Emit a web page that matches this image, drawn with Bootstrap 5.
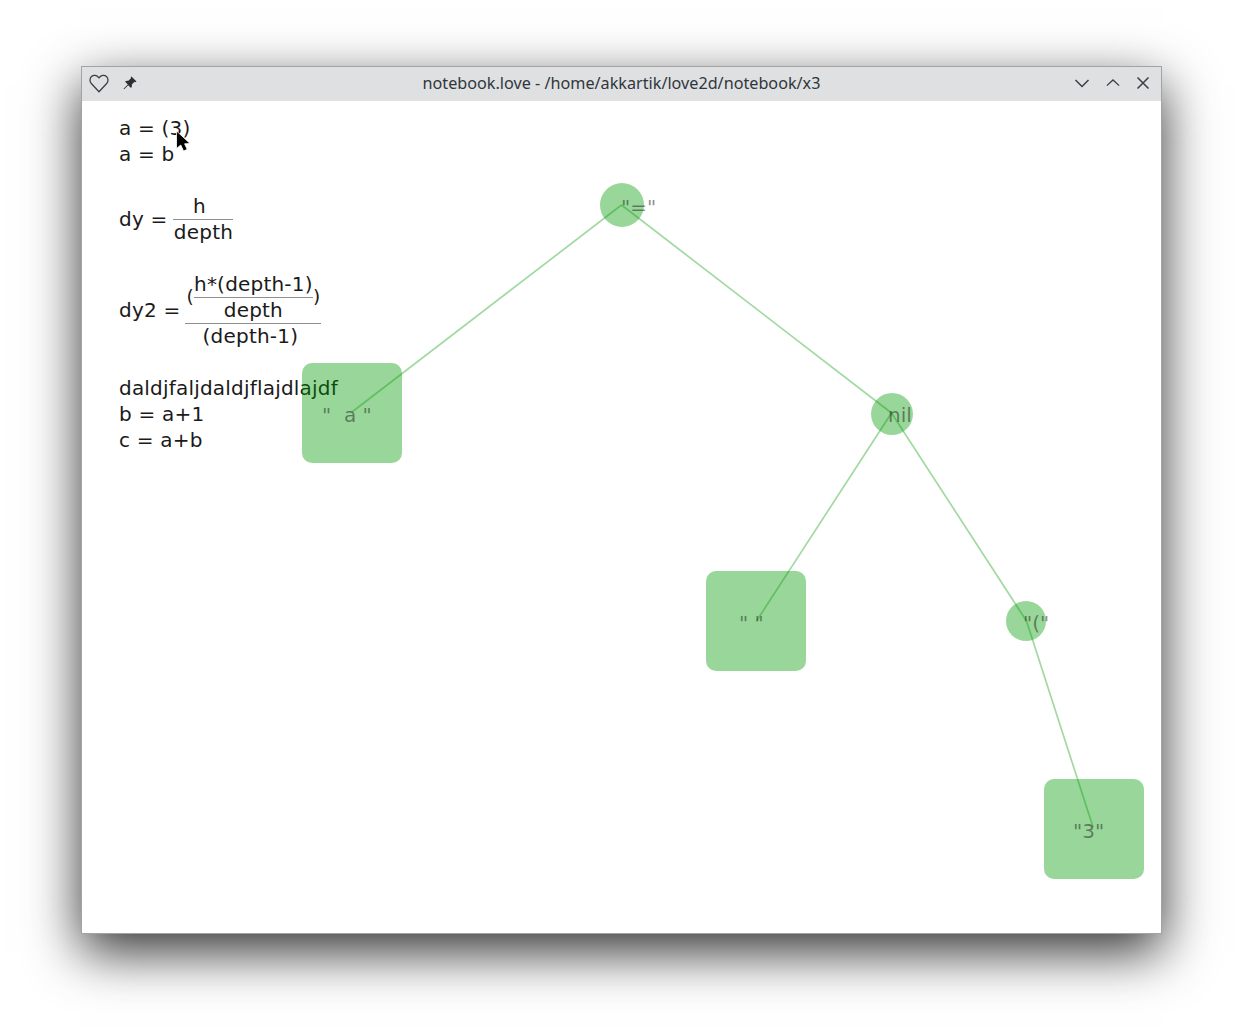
<!doctype html>
<html lang="en">
<head>
<meta charset="utf-8">
<title>notebook.love</title>
<link href="https://cdn.jsdelivr.net/npm/bootstrap@5.3.0/dist/css/bootstrap.min.css" rel="stylesheet">
<style>
html,body{height:100%;overflow:hidden;background:#fff}
.desk{padding:66px 0 0 81px;height:1032px}
.win{width:1081px;height:868px;border:1px solid #a3a3a3;background:#fff;box-shadow:0 18px 50px rgba(0,0,0,.8)}
.tbar{height:34px;padding-bottom:2px;background:#dee0e2;display:grid;grid-template-columns:1fr auto 1fr;align-items:center;font:16.2px/30px "Noto Sans",sans-serif;color:#31363b}
.tbar svg{display:block}
.tleft{padding-left:6px}
.tright{padding-right:11px}
.canvasx{height:832px;position:relative;font:20px/26px "DejaVu Sans",sans-serif;letter-spacing:.2px;color:#1a1a1a}
.notes{padding:14px 0 0 37px}
.ln{height:26px;white-space:pre}
.eq{display:flex;align-items:center;white-space:pre}
.fr{display:flex;flex-direction:column;text-align:center}
.fr>div{height:26px}
.fr>.over{height:auto}
.fr>.under{border-top:1px solid #8f8f8f;line-height:25px}
.f1{width:60px;margin-left:6px}
.f2{width:136px;margin-left:5px}
.f3{display:flex;align-items:center;justify-content:center}
.f3 .fr{width:119px;white-space:nowrap}
.shift{padding-right:6px}
.paren{font-size:18.5px;line-height:26px}
.wires{position:absolute;left:0;top:0;pointer-events:none}
.nd{position:absolute;background:rgba(0,153,0,.4)}
.sq{width:100px;height:100px;border-radius:10px}
.rnd{border-radius:50%}
.lab{position:absolute;color:rgba(30,30,30,.5);white-space:pre;line-height:26px;letter-spacing:0}
.cursorx{position:absolute;left:92px;top:29px}
</style>
</head>
<body>
<div class="desk">
  <div class="win d-flex flex-column">
    <div class="tbar">
      <div class="d-flex align-items-center gap-2 tleft">
        <svg class="me-1" width="22" height="22" viewBox="0 0 24 24" fill="none" stroke="#3b3f43" stroke-width="1.400"><path d="M12 21.500 3.600 12.600C1.600 10.400 1.800 6.900 3.800 5 6 3 9.600 3.200 12 6.300 14.400 3.200 18 3 20.200 5c2 1.900 2.200 5.400.2 7.600z"/></svg>
        <svg width="16" height="16" viewBox="0 0 16 16" fill="#2d3033"><path d="M9.500 1.500 14.500 6.500 13.500 7.300 12.600 6.800 9.800 9.600C10.200 11 9.900 12 9 13L6.200 10.200 2.200 14.200 1.600 14 1.800 13.400 5.800 9.400 3 6.600C4 5.700 5 5.400 6.400 5.800L9.200 3 8.700 2.300z"/></svg>
      </div>
      <div>notebook.love - /home/akkartik/love2d/notebook/x3</div>
      <div class="d-flex align-items-center justify-content-end tright">
        <svg width="16" height="16" viewBox="0 0 16 16" fill="none" stroke="#3b3f43" stroke-width="1.500"><path d="M1.500 5 8 11.500 14.500 5"/></svg>
        <svg class="ms-3" width="14" height="16" viewBox="0 0 16 16" fill="none" stroke="#3b3f43" stroke-width="1.500"><path d="M1 11 8 4.500 15 11"/></svg>
        <svg class="ms-3" width="14" height="14" viewBox="0 0 14 14" fill="none" stroke="#3b3f43" stroke-width="1.500"><path d="M1.500 1.500 12.500 12.500M12.500 1.500 1.500 12.500"/></svg>
      </div>
    </div>
    <div class="canvasx">
      <div class="notes">
        <div class="ln">a = (3)</div>
        <div class="ln">a = b</div>
        <div class="ln"></div>
        <div class="eq"><span>dy =</span>
          <div class="fr f1"><div class="pe-2">h</div><div class="under">depth</div></div>
        </div>
        <div class="ln"></div>
        <div class="eq"><span>dy2 =</span>
          <div class="fr f2">
            <div class="over f3"><span class="paren">(</span>
              <div class="fr"><div>h*(depth-1)</div><div class="under">depth</div></div>
              <span class="paren">)</span></div>
            <div class="under shift">(depth-1)</div>
          </div>
        </div>
        <div class="ln"></div>
        <div class="ln">daldjfaljdaldjflajdlajdf</div>
        <div class="ln">b = a+1</div>
        <div class="ln">c = a+b</div>
      </div>

      <svg class="wires" width="1080" height="832" fill="none" stroke="rgba(0,153,0,.37)" stroke-width="1.700">
        <path d="M539.500 104 270 311"/>
        <path d="M539.500 104 809.500 312"/>
        <path d="M809.500 312 674.500 520"/>
        <path d="M809.500 312 944.500 520"/>
        <path d="M944.500 520 1011 726"/>
      </svg>

      <div class="nd rnd" style="left:517.500px;top:82px;width:44px;height:44px"></div>
      <div class="nd sq" style="left:220px;top:262px"></div>
      <div class="nd rnd" style="left:789px;top:292px;width:42px;height:42px"></div>
      <div class="nd sq" style="left:624px;top:470px"></div>
      <div class="nd rnd" style="left:924px;top:500px;width:40px;height:40px"></div>
      <div class="nd sq" style="left:962px;top:678px"></div>

      <div class="lab" style="left:539px;top:93px">"="</div>
      <div class="lab" style="left:240px;top:301px">"  a "</div>
      <div class="lab" style="left:806px;top:301px">nil</div>
      <div class="lab" style="left:657px;top:509px">" "</div>
      <div class="lab" style="left:941px;top:509px">"("</div>
      <div class="lab" style="left:991px;top:717px">"3"</div>

      <svg class="cursorx" width="18" height="26" viewBox="0 0 18 26"><path d="M2.500 1 2.500 18.500 6.800 15 9.500 21 13.200 19.400 10.600 13.800 16 13.500z" fill="#000" stroke="#fff" stroke-width=".8"/></svg>
    </div>
  </div>
</div>
</body>
</html>
